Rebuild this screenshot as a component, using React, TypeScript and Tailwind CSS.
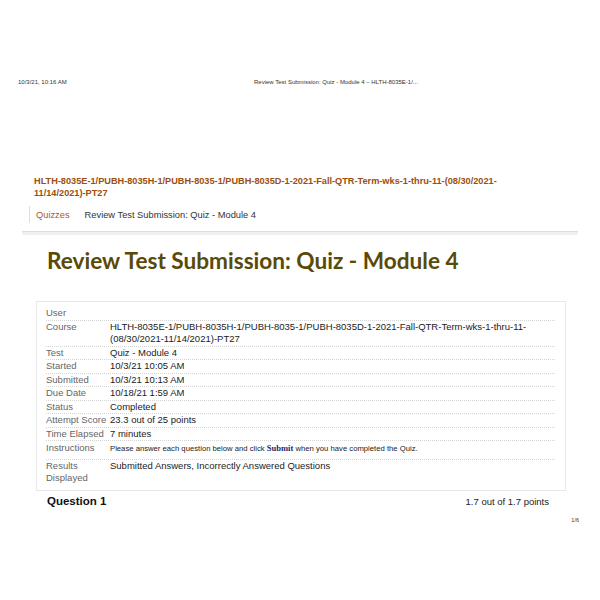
const rows: { label: string; value: React.ReactNode }[] = [
  { label: "User", value: "" },
  {
    label: "Course",
    value: (
      <>
        HLTH-8035E-1/PUBH-8035H-1/PUBH-8035-1/PUBH-8035D-1-2021-Fall-QTR-Term-wks-1-thru-11-
        <br />
        (08/30/2021-11/14/2021)-PT27
      </>
    ),
  },
  { label: "Test", value: "Quiz - Module 4" },
  { label: "Started", value: "10/3/21 10:05 AM" },
  { label: "Submitted", value: "10/3/21 10:13 AM" },
  { label: "Due Date", value: "10/18/21 1:59 AM" },
  { label: "Status", value: "Completed" },
  { label: "Attempt Score", value: "23.3 out of 25 points" },
  { label: "Time Elapsed", value: "7 minutes" },
];

function App() {
  return (
    <main
      className="w-[600px] h-[600px] bg-white overflow-hidden text-[#222]"
      style={{ fontFamily: '"Liberation Sans", Arial, sans-serif' }}
    >
      {/* print header */}
      <div className="flex pt-[79px] text-[6px] leading-[6px] text-[#333]">
        <div className="w-[254px] pl-[18px]">10/3/21, 10:16 AM</div>
        <div>Review Test Submission: Quiz - Module 4 – HLTH-8035E-1/...</div>
      </div>

      {/* course link */}
      <div className="mt-[90px] pl-[34px] pr-[80px] text-[9.2px] leading-[12px] font-bold text-[#9c4f10]">
        HLTH-8035E-1/PUBH-8035H-1/PUBH-8035-1/PUBH-8035D-1-2021-Fall-QTR-Term-wks-1-thru-11-(08/30/2021-
        <br />
        11/14/2021)-PT27
      </div>

      {/* breadcrumb */}
      <div className="mt-[7px] ml-[29px] flex items-center h-[17px] border-l border-[#ddd] text-[9.3px] leading-[12px]">
        <span className="pl-[6px] text-[#a85c1c]">Quizzes</span>
        <span className="pl-[15px] text-[#333]">Review Test Submission: Quiz - Module 4</span>
      </div>
      <div className="mt-[8px] mx-[22px] h-[4px] border-t border-[#dedede] bg-[#f0f0f0]" />

      {/* heading */}
      <h1
        className="mt-[12px] pl-[47px] text-[22.6px] leading-[28px] font-bold text-[#5a4a08]"
        style={{ fontFamily: 'Lato, "DejaVu Sans", sans-serif' }}
      >
        Review Test Submission: Quiz - Module 4
      </h1>

      {/* details box */}
      <div className="mt-[26px] ml-[36px] w-[530px] border border-[#e8e8e8] pl-[9px] pr-[10px] pt-[5px] pb-[6px] text-[9.5px] leading-[12.5px]">
        {rows.map((r) => (
          <div key={r.label} className="flex border-b border-dotted border-[#d4d4d4]">
            <div className="w-[64px] shrink-0 text-[#666] whitespace-nowrap">{r.label}</div>
            <div className="text-[#222] min-h-[12.5px]">{r.value}</div>
          </div>
        ))}
        <div className="flex items-start border-b border-dotted border-[#d4d4d4] pt-[1px] pb-[4px]">
          <div className="w-[64px] shrink-0 text-[#666]">Instructions</div>
          <div className="text-[7.7px] leading-[12px] text-[#222]">
            Please answer each question below and click{" "}
            <span
              className="font-bold text-[8.5px] text-[#1c2a6b]"
              style={{ fontFamily: '"Liberation Serif", "DejaVu Serif", serif' }}
            >
              Submit
            </span>{" "}
            when you have completed the Quiz.
          </div>
        </div>
        <div className="flex leading-[12px]">
          <div className="w-[64px] shrink-0 text-[#666]">
            Results
            <br />
            Displayed
          </div>
          <div className="text-[#222]">Submitted Answers, Incorrectly Answered Questions</div>
        </div>
      </div>

      {/* question header */}
      <div className="mt-[4px] flex items-center pl-[47px] pr-[51px] h-[14px]">
        <div className="text-[11.5px] font-bold text-[#111]">Question 1</div>
        <div className="ml-auto text-[9.5px] text-[#222]">1.7 out of 1.7 points</div>
      </div>
      <div className="mt-[7px] pr-[21px] text-right text-[5.5px] text-[#333]">1/6</div>
    </main>
  );
}

export default App;
